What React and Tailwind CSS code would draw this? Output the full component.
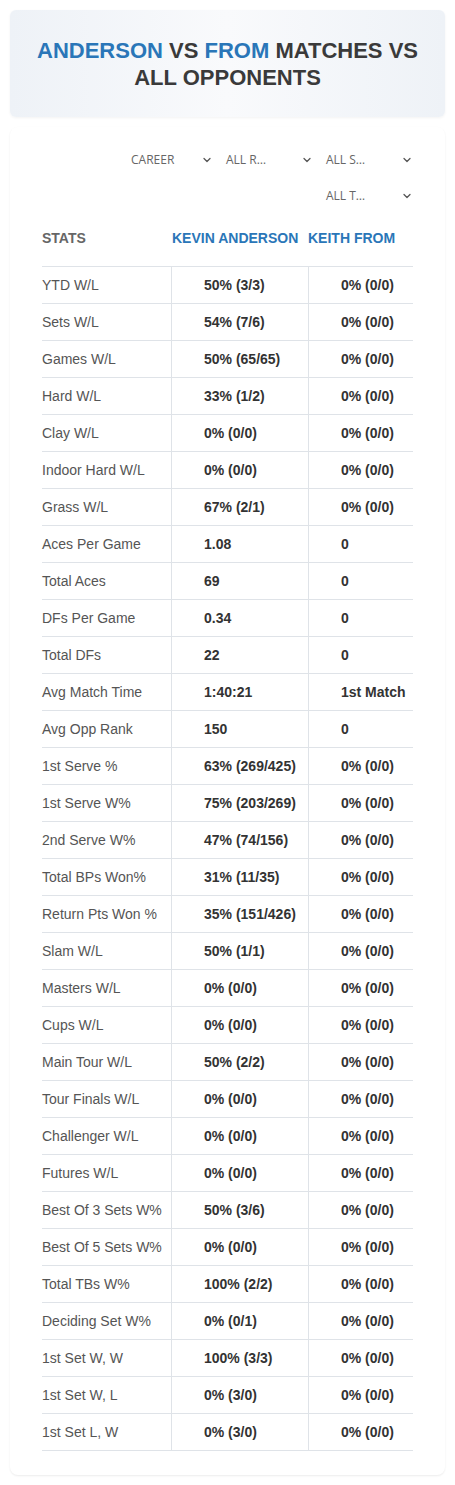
import { ChevronDown } from 'lucide-react';

const rows = [
  ['YTD W/L', '50% (3/3)', '0% (0/0)'],
  ['Sets W/L', '54% (7/6)', '0% (0/0)'],
  ['Games W/L', '50% (65/65)', '0% (0/0)'],
  ['Hard W/L', '33% (1/2)', '0% (0/0)'],
  ['Clay W/L', '0% (0/0)', '0% (0/0)'],
  ['Indoor Hard W/L', '0% (0/0)', '0% (0/0)'],
  ['Grass W/L', '67% (2/1)', '0% (0/0)'],
  ['Aces Per Game', '1.08', '0'],
  ['Total Aces', '69', '0'],
  ['DFs Per Game', '0.34', '0'],
  ['Total DFs', '22', '0'],
  ['Avg Match Time', '1:40:21', '1st Match'],
  ['Avg Opp Rank', '150', '0'],
  ['1st Serve %', '63% (269/425)', '0% (0/0)'],
  ['1st Serve W%', '75% (203/269)', '0% (0/0)'],
  ['2nd Serve W%', '47% (74/156)', '0% (0/0)'],
  ['Total BPs Won%', '31% (11/35)', '0% (0/0)'],
  ['Return Pts Won %', '35% (151/426)', '0% (0/0)'],
  ['Slam W/L', '50% (1/1)', '0% (0/0)'],
  ['Masters W/L', '0% (0/0)', '0% (0/0)'],
  ['Cups W/L', '0% (0/0)', '0% (0/0)'],
  ['Main Tour W/L', '50% (2/2)', '0% (0/0)'],
  ['Tour Finals W/L', '0% (0/0)', '0% (0/0)'],
  ['Challenger W/L', '0% (0/0)', '0% (0/0)'],
  ['Futures W/L', '0% (0/0)', '0% (0/0)'],
  ['Best Of 3 Sets W%', '50% (3/6)', '0% (0/0)'],
  ['Best Of 5 Sets W%', '0% (0/0)', '0% (0/0)'],
  ['Total TBs W%', '100% (2/2)', '0% (0/0)'],
  ['Deciding Set W%', '0% (0/1)', '0% (0/0)'],
  ['1st Set W, W', '100% (3/3)', '0% (0/0)'],
  ['1st Set W, L', '0% (3/0)', '0% (0/0)'],
  ['1st Set L, W', '0% (3/0)', '0% (0/0)'],
];

function Select({ label, width }) {
  return (
    <div className={`flex items-center justify-between h-[30px] ${width}`}>
      <span className="text-[12px] text-[#666]">{label}</span>
      <ChevronDown size={12} strokeWidth={2.5} className="text-[#555]" />
    </div>
  );
}

export default function App() {
  return (
    <div className="min-h-screen bg-white px-[10px] pt-[10px] pb-[10px] font-['Liberation_Sans',Arial,sans-serif]">
      <header className="rounded-md bg-gradient-to-r from-[#eef2f7] via-[#f9fafc] to-[#eef2f7] shadow-[0_1px_3px_rgba(0,0,0,0.05)] h-[107px] flex items-center justify-center px-4">
        <h1 className="text-center text-[22px] leading-[27px] font-bold text-[#3a3a3a]">
          <span className="text-[#2a76b8]">ANDERSON</span> VS <span className="text-[#2a76b8]">FROM</span> MATCHES VS ALL OPPONENTS
        </h1>
      </header>

      <section className="mt-[10px] rounded-lg bg-white shadow-[0_1px_2px_rgba(0,0,0,0.08)] px-[32px] pt-[18px] pb-[24px]">
        <div className="flex flex-col items-end gap-[6px] font-['Open_Sans',sans-serif]">
          <div className="flex gap-[13px]">
            <Select label="CAREER" width="w-[82px]" />
            <Select label="ALL R…" width="w-[87px]" />
            <Select label="ALL S…" width="w-[87px]" />
          </div>
          <Select label="ALL T…" width="w-[87px]" />
        </div>

        <div className="grid grid-cols-[129px_137px_105px] h-[56px] items-center border-b border-[#dfe3e8] text-[14px] font-bold">
          <div className="text-[#666]">STATS</div>
          <div className="text-[#2a76b8] pl-[1px] whitespace-nowrap">KEVIN ANDERSON</div>
          <div className="text-[#2a76b8] whitespace-nowrap">KEITH FROM</div>
        </div>

        {rows.map(([label, a, b]) => (
          <div
            key={label}
            className="grid grid-cols-[129px_137px_105px] h-[37px] border-b border-[#dfe3e8] text-[14px]"
          >
            <div className="flex items-center text-[#555] whitespace-nowrap">{label}</div>
            <div className="flex items-center border-l border-[#dfe3e8] pl-8 font-bold text-[#333] whitespace-nowrap">{a}</div>
            <div className="flex items-center border-l border-[#dfe3e8] pl-8 font-bold text-[#333] whitespace-nowrap">{b}</div>
          </div>
        ))}
      </section>
    </div>
  );
}
